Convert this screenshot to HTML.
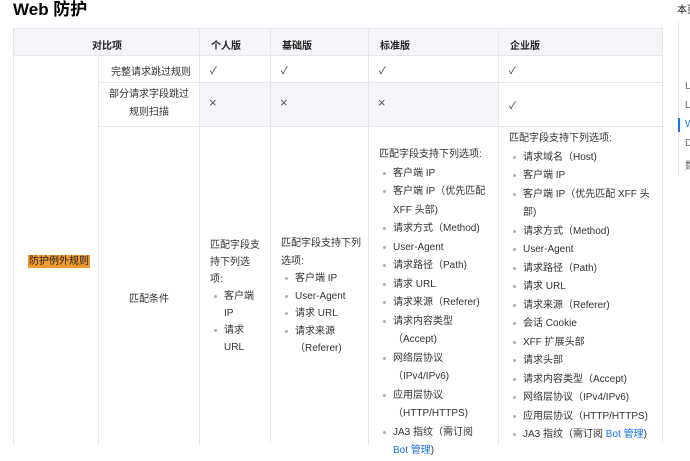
<!DOCTYPE html>
<html><head><meta charset="utf-8"><style>
*{margin:0;padding:0;box-sizing:border-box}
body{width:690px;height:444px;overflow:hidden;background:#fff;font-family:"Liberation Sans","Noto Sans CJK SC",sans-serif;color:#333;font-size:10px;position:relative}
.a{position:absolute;white-space:nowrap}
.w{white-space:normal}
.h1{left:13px;top:-1px;font-size:17px;font-weight:bold;color:#000;line-height:22px}
.bg{background:#f4f5f9}
.vl{position:absolute;width:1px;background:#e5e6eb}
.hl{position:absolute;height:1px;background:#e5e6eb}
.th{font-weight:bold;color:#222;top:37px}
ul{list-style:none}
li{position:relative;padding-left:14px}
li:before{content:"";position:absolute;left:4px;top:7px;width:3px;height:3px;border-radius:2px;background:#b0b0b0}
.blk{line-height:18.5px}
.b{color:#1a73e8}
.x{font-size:13px;color:#555}
</style></head><body>
<div class="a h1">Web 防护</div>
<div class="a bg" style="left:13px;top:28px;width:649px;height:27px"></div>
<div class="a" style="left:199px;top:82px;width:299px;height:44px;background:#f4f5f9"></div>
<div class="hl" style="left:13px;top:28px;width:649px"></div>
<div class="hl" style="left:13px;top:55px;width:649px"></div>
<div class="hl" style="left:98px;top:82px;width:564px"></div>
<div class="hl" style="left:98px;top:126px;width:564px"></div>
<div class="vl" style="left:13px;top:28px;height:416px"></div>
<div class="vl" style="left:98px;top:55px;height:389px"></div>
<div class="vl" style="left:199px;top:28px;height:416px"></div>
<div class="vl" style="left:270px;top:28px;height:416px"></div>
<div class="vl" style="left:368px;top:28px;height:416px"></div>
<div class="vl" style="left:498px;top:28px;height:416px"></div>
<div class="vl" style="left:662px;top:28px;height:416px"></div>
<div class="a th" style="left:92px">对比项</div>
<div class="a th" style="left:211px">个人版</div>
<div class="a th" style="left:282px">基础版</div>
<div class="a th" style="left:380px">标准版</div>
<div class="a th" style="left:510px">企业版</div>
<div class="a" style="left:111px;top:63px">完整请求跳过规则</div>
<div class="a" style="left:210px;top:62px">✓</div>
<div class="a" style="left:281px;top:62px">✓</div>
<div class="a" style="left:379px;top:62px">✓</div>
<div class="a" style="left:509px;top:62px">✓</div>
<div class="a w" style="left:106px;top:86px;width:86px;text-align:center;line-height:18px">部分请求字段跳过<br>规则扫描</div>
<div class="a x" style="left:209px;top:95px">×</div>
<div class="a x" style="left:280px;top:95px">×</div>
<div class="a x" style="left:378px;top:95px">×</div>
<div class="a" style="left:509px;top:97px">✓</div>
<div class="a" style="left:28px;top:255px;background:#f29a2e;color:#222;line-height:13px;padding:0 1px">防护例外规则</div>
<div class="a" style="left:129px;top:290px">匹配条件</div>
<div class="a w" style="left:210px;top:237px;width:52px;line-height:17px">匹配字段支持下列选项:
<ul><li>客户端 IP</li><li>请求 URL</li></ul></div>
<div class="a w" style="left:281px;top:235px;width:80px;line-height:17.5px">匹配字段支持下列选项:
<ul><li>客户端 IP</li><li>User-Agent</li><li>请求 URL</li><li>请求来源（Referer)</li></ul></div>
<div class="a w blk" style="left:379px;top:146px;width:110px">匹配字段支持下列选项:
<ul><li>客户端 IP</li><li>客户端 IP（优先匹配 XFF 头部)</li><li>请求方式（Method)</li><li>User-Agent</li><li>请求路径（Path)</li><li>请求 URL</li><li>请求来源（Referer)</li><li>请求内容类型（Accept)</li><li>网络层协议（IPv4/IPv6)</li><li>应用层协议（HTTP/HTTPS)</li><li>JA3 指纹（需订阅 <span class="b">Bot 管理</span>)</li></ul></div>
<div class="a w blk" style="left:509px;top:130px;width:150px">匹配字段支持下列选项:
<ul><li>请求域名（Host)</li><li>客户端 IP</li><li>客户端 IP（优先匹配 XFF 头部)</li><li>请求方式（Method)</li><li>User-Agent</li><li>请求路径（Path)</li><li>请求 URL</li><li>请求来源（Referer)</li><li>会话 Cookie</li><li>XFF 扩展头部</li><li>请求头部</li><li>请求内容类型（Accept)</li><li>网络层协议（IPv4/IPv6)</li><li>应用层协议（HTTP/HTTPS)</li><li>JA3 指纹（需订阅 <span class="b">Bot 管理</span>)</li></ul></div>
<div class="a" style="left:677px;top:1px;color:#222">本页</div>
<div class="vl" style="left:678px;top:20px;height:155px"></div>
<div class="a" style="left:678px;top:118px;width:2px;height:14px;background:#1a73e8"></div>
<div class="a" style="left:685px;top:81px;color:#666">L</div>
<div class="a" style="left:685px;top:100px;color:#666">L</div>
<div class="a" style="left:685px;top:119px;color:#1a73e8">W</div>
<div class="a" style="left:685px;top:138px;color:#666">D</div>
<div class="a" style="left:685px;top:157px;color:#666">数</div>
</body></html>
